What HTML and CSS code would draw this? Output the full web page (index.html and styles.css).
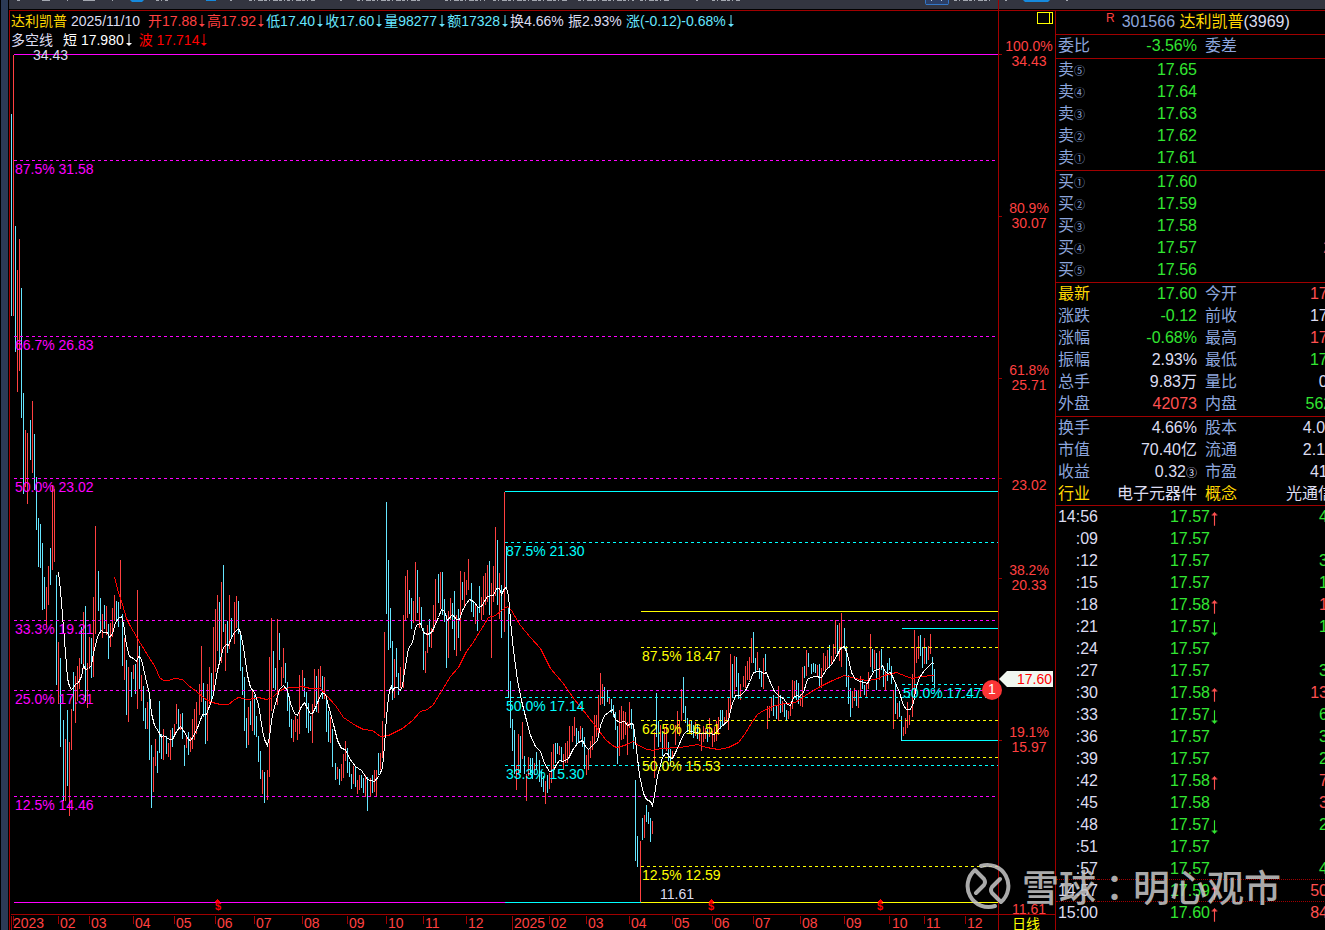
FILE: index.html
```html
<!DOCTYPE html>
<html lang="zh-CN">
<head>
<meta charset="utf-8">
<meta name="viewport" content="width=device-width, initial-scale=1">
<title>达利凯普 301566</title>
<link rel="stylesheet" href="styles.css">
</head>
<body>
<svg class="defs" aria-hidden="true">
  <symbol id="down" viewBox="0 0 7 14"><path d="M3 1h1v12H3zM1 10h5v1H1zM2 11h3v1H2z" fill="currentColor"/></symbol>
  <symbol id="up" viewBox="0 0 7 14"><path d="M3 1h1v12H3zM1 3h5v1H1zM2 2h3v1H2z" fill="currentColor"/></symbol>
</svg>
<div class="app">
  <div class="rail"></div>
  <div class="workspace">
    <div class="toolbar">
      <svg width="1316" height="9" viewBox="9 0 1316 9" aria-hidden="true">
        <path d="M17 0h3v1h-3zM42 0h8v1h-8zM67 0h1v1h-1zM83 0h12v1H83zM112 0h1v1h-1z" fill="#a3a7b0"/>
        <path d="M156 .5h12M249 .5h36M287 .5h28M357 .5h64M445 .5h40M493 .5h74M578 .5h56M640 .5h30M712 .5h28M954 .5h36M230 .5h2M340 .5h2M696 .5h2M1005 .5h2M1066 .5h2" stroke="#a3a7b0" stroke-dasharray="3 2 1 3 5 1"/>
        <path d="M130 0h14l-2 2h-10zM206 0h10v1h-10zM1023 0h27l-2 2h-23z" fill="#1689dc"/>
        <path d="M925 0h24v3l-1 2h-22l-1-2z" fill="#3377c8"/><path d="M926 0h22v4h-22z" fill="#2c3f66"/><path d="M931 0h1v1h-1zM941 0h1v1h-1z" fill="#bcd"/>
      </svg>
    </div>
    <main class="panes">
      <section class="chart-pane">
        <header class="quote">
          <div class="line">
            <span class="name">达利凯普</span><span class="date">2025/11/10</span>
            <span class="red">开17.88<svg class="arr"><use href="#down"/></svg></span>
            <span class="red">高17.92<svg class="arr"><use href="#down"/></svg></span>
            <span class="cy">低17.40<svg class="arr"><use href="#down"/></svg></span>
            <span class="cy">收17.60<svg class="arr"><use href="#down"/></svg></span>
            <span class="cy">量98277<svg class="arr"><use href="#down"/></svg></span>
            <span class="cy">额17328<svg class="arr"><use href="#down"/></svg></span>
            <span class="pct">换4.66%</span><span class="pct">振2.93%</span>
            <span class="cy">涨(-0.12)-0.68%<svg class="arr"><use href="#down"/></svg></span>
            <button class="toggle" type="button" aria-label="侧栏"></button>
          </div>
          <div class="line second">
            <span class="ind">多空线</span><span class="white">短 17.980<svg class="arr"><use href="#down"/></svg></span>
            <span class="pure">波 17.714<svg class="arr"><use href="#down"/></svg></span>
          </div>
        </header>
        <svg class="chart" viewBox="10 50 1045 880" role="img" aria-label="日线">
          <g transform="translate(.5 .5)" fill="none">
            <path class="frame" d="M998 -40V930M10 914H1055M998 54h3M998 216h3M998 378h3M998 478h3M998 578h3M998 740h3M11 915V930M13 915V924M58 915v8M89 915v8M133 915v8M174 915v8M215 915v8M254 915v8M302 915v8M347 915v8M386 915v8M423 915v8M466 915v8M512 915V930M549 915v8M586 915v8M629 915v8M672 915v8M712 915v8M753 915v8M800 915v8M844 915v8M889 915v8M924 915v8M965 915v8"/>
            <path id="falls" class="fall"/>
            <path id="rises" class="rise"/>
            <path class="mg" d="M13 54H997M13 902H504"/>
            <path class="mg dash" d="M13 160H997M13 336H997M13 478H997M13 620H997M13 690H997M13 796H997"/>
            <path class="cn" d="M504 491H997M504 902H640M901 628H997M901 740H997"/>
            <path class="cn dash" d="M504 542H997M504 697H997M504 765H997M901 684H997"/>
            <path class="yl" d="M640 611H997M640 902H997"/>
            <path class="yl dash" d="M640 647H997M640 720H997M640 757H997M640 866H997"/>
            <polyline class="slow" points="114,577 118,592 122,604 126,618 130,626 136,636 140,643 148,656 155,667 159,677 163,680 168,680 174,678 182,679 188,685 196,691 204,698 212,702 220,704 228,704 233,700 238,697 247,699 254,698 258,697 266,699 272,697 278,691 284,688 291,687 297,687 302,686 310,688 320,688 326,695 335,705 343,717 355,725 363,729 372,730 380,736 388,735 392,733 402,728 412,720 420,711 427,709 433,704 442,689 450,676 458,667 466,651 472,643 480,630 488,617 495,615 501,610 507,606 511,610 520,625 530,637 540,648 550,668 562,682 574,699 586,714 596,727 605,739 612,745 616,747 624,745 633,741 638,745 647,749 653,750 660,748 680,747 697,744 706,747 718,749 728,747 738,742 744,734 752,721 757,714 763,710 775,705 785,703 795,702 805,695 820,686 832,680 844,675 855,678 866,680 875,679 884,675 896,672 906,676 912,678 920,676 934,675"/>
            <polyline class="fast" points="58,572 60,590 62,615 64,640 66,665 67,678 69,686 71,689 73,687 75,684 78,682 81,676 83,665 85,669 88,668 91,665 93,653 96,640 98,634 101,630 103,632 107,632 109,637 112,633 115,622 118,618 121,616 123,623 126,645 129,656 133,658 136,661 138,656 140,657 142,663 146,682 149,693 151,713 154,725 158,731 161,737 163,735 166,737 169,739 172,739 176,731 180,726 183,730 188,739 190,740 193,736 198,725 202,714 206,714 210,703 213,694 217,670 220,658 223,647 226,644 228,645 231,637 234,632 238,628 240,632 243,647 247,675 250,687 254,692 258,704 262,730 264,739 267,745 269,736 272,714 275,703 279,689 283,685 287,690 290,703 294,713 297,715 301,706 304,702 307,708 310,713 312,713 316,705 319,697 322,692 325,694 328,705 333,724 337,740 341,748 345,749 349,758 355,766 361,770 367,779 374,781 379,775 382,767 384,745 385,730 387,705 389,690 391,686 392,691 394,687 397,687 400,690 402,685 405,665 408,648 412,642 415,627 417,624 420,623 423,632 427,634 431,632 434,626 438,617 441,609 444,611 447,620 452,614 456,619 459,619 462,610 466,603 469,599 473,601 478,607 481,606 487,596 493,595 496,588 499,588 501,594 504,588 506,587 508,595 510,620 513,650 517,680 521,700 526,720 530,735 535,746 540,751 544,763 549,771 553,770 556,764 559,760 563,761 568,758 573,748 578,742 582,740 585,746 588,749 593,744 597,740 600,725 604,715 612,709 615,719 619,722 624,721 627,725 631,723 633,724 635,740 639,775 643,793 646,799 650,801 652,805 654,795 657,775 659,768 662,757 665,753 667,753 669,757 672,758 676,750 680,741 683,734 687,730 690,731 695,732 700,733 708,733 714,734 719,728 728,720 731,706 735,695 740,695 745,690 749,682 753,672 759,671 764,673 766,672 769,680 774,691 779,696 783,698 787,704 790,705 793,697 796,695 799,696 803,692 807,679 810,677 815,676 821,677 826,669 831,664 836,656 840,648 844,646 847,654 851,672 855,679 860,681 867,683 870,677 874,670 880,668 882,665 884,670 887,673 890,672 893,678 899,692 903,705 906,709 910,709 913,702 916,686 919,677 924,670 929,665 932,662 934,664"/>
          </g>
          <g class="t-mg">
            <text x="15" y="174">87.5% 31.58</text><text x="15" y="350">66.7% 26.83</text><text x="15" y="492">50.0% 23.02</text>
            <text x="15" y="634">33.3% 19.21</text><text x="15" y="704">25.0% 17.31</text><text x="15" y="810">12.5% 14.46</text>
          </g>
          <g class="t-cn">
            <text x="506" y="556">87.5% 21.30</text><text x="506" y="711">50.0% 17.14</text><text x="506" y="779">33.3% 15.30</text><text x="903" y="698">50.0% 17.47</text>
          </g>
          <g class="t-yl">
            <text x="642" y="661">87.5% 18.47</text><text x="642" y="734">62.5% 16.51</text><text x="642" y="771">50.0% 15.53</text><text x="642" y="880">12.5% 12.59</text>
          </g>
          <g class="t-wh"><text x="33" y="60">34.43</text><text x="660" y="899">11.61</text></g>
          <g class="t-axis mid">
            <text x="1029" y="51">100.0%</text><text x="1029" y="66">34.43</text>
            <text x="1029" y="213">80.9%</text><text x="1029" y="228">30.07</text>
            <text x="1029" y="375">61.8%</text><text x="1029" y="390">25.71</text>
            <text x="1029" y="490">23.02</text>
            <text x="1029" y="575">38.2%</text><text x="1029" y="590">20.33</text>
            <text x="1029" y="737">19.1%</text><text x="1029" y="752">15.97</text>
            <text x="1029" y="914">11.61</text>
          </g>
          <g class="t-axis">
            <text x="13" y="928">2023</text><text x="60" y="928">02</text><text x="91" y="928">03</text><text x="135" y="928">04</text><text x="176" y="928">05</text><text x="217" y="928">06</text><text x="256" y="928">07</text><text x="304" y="928">08</text><text x="349" y="928">09</text><text x="388" y="928">10</text><text x="425" y="928">11</text><text x="468" y="928">12</text>
            <text x="514" y="928">2025</text><text x="551" y="928">02</text><text x="588" y="928">03</text><text x="631" y="928">04</text><text x="674" y="928">05</text><text x="714" y="928">06</text><text x="755" y="928">07</text><text x="802" y="928">08</text><text x="846" y="928">09</text><text x="892" y="928">10</text><text x="926" y="928">11</text><text x="967" y="928">12</text>
          </g>
          <g class="t-div mid">
            <path d="M217 899l3 3h-6zM711 899l3 3h-6zM880 899l3 3h-6z"/>
            <text x="218" y="910">$</text><text x="711" y="910">$</text><text x="880" y="910">$</text>
          </g>
          <text class="period" x="1012" y="929">日线</text>
          <path d="M999 679l8-8h46v16h-46z" fill="#f0f7f0"/>
          <text class="last" x="1017" y="684">17.60</text>
          <circle cx="992" cy="690" r="10" fill="#fb3535"/>
          <text class="badge" x="992" y="694">1</text>
        </svg>
      </section>
      <aside class="side">
        <h1 class="title"><sup>R</sup><span class="code">301566</span> <span class="name">达利凯普</span><span class="rank">(3969)</span></h1>
        <table class="grid">
          <colgroup><col class="c1"><col class="c2"><col class="c3"><col class="c4"></colgroup>
          <tbody class="single"><tr><th>委比</th><td class="gr">-3.56%</td><th>委差</th><td></td></tr></tbody>
          <tbody>
            <tr><th>卖<small>⑤</small></th><td class="gr">17.65</td><th></th><td></td></tr>
            <tr><th>卖<small>④</small></th><td class="gr">17.64</td><th></th><td></td></tr>
            <tr><th>卖<small>③</small></th><td class="gr">17.63</td><th></th><td></td></tr>
            <tr><th>卖<small>②</small></th><td class="gr">17.62</td><th></th><td></td></tr>
            <tr><th>卖<small>①</small></th><td class="gr">17.61</td><th></th><td></td></tr>
          </tbody>
          <tbody>
            <tr><th>买<small>①</small></th><td class="gr">17.60</td><th></th><td></td></tr>
            <tr><th>买<small>②</small></th><td class="gr">17.59</td><th></th><td></td></tr>
            <tr><th>买<small>③</small></th><td class="gr">17.58</td><th></th><td></td></tr>
            <tr><th>买<small>④</small></th><td class="gr">17.57</td><th></th><td class="rd">200</td></tr>
            <tr><th>买<small>⑤</small></th><td class="gr">17.56</td><th></th><td></td></tr>
          </tbody>
          <tbody>
            <tr><th class="gold">最新</th><td class="gr">17.60</td><th>今开</th><td class="rd">17.88</td></tr>
            <tr><th>涨跌</th><td class="gr">-0.12</td><th>前收</th><td>17.72</td></tr>
            <tr><th>涨幅</th><td class="gr">-0.68%</td><th>最高</th><td class="rd">17.92</td></tr>
            <tr><th>振幅</th><td>2.93%</td><th>最低</th><td class="gr">17.40</td></tr>
            <tr><th>总手</th><td>9.83万</td><th>量比</th><td>0.84</td></tr>
            <tr><th>外盘</th><td class="rd">42073</td><th>内盘</th><td class="gr">56204</td></tr>
          </tbody>
          <tbody class="tight">
            <tr><th>换手</th><td>4.66%</td><th>股本</th><td>4.00亿</td></tr>
            <tr><th>市值</th><td>70.40亿</td><th>流通</th><td>2.10亿</td></tr>
            <tr><th>收益</th><td>0.32<small>③</small></td><th>市盈</th><td>41.25</td></tr>
            <tr><th class="gold">行业</th><td>电子元器件</td><th class="gold">概念</th><td>光通信息</td></tr>
          </tbody>
        </table>
        <table class="ticks">
          <colgroup><col class="k1"><col class="k2"><col class="k3"><col class="k4"></colgroup>
          <tbody id="ticks"></tbody>
        </table>
      </aside>
    </main>
  </div>
</div>
<div class="watermark">
  <svg width="48" height="48" viewBox="-24 -24 48 48" aria-hidden="true"><path d="M-12 7L-4-1Q-2-4-4-7L-13-16A21 21 0 0 0 7 20M12-7L4 1Q2 4 4 7L13 16A21 21 0 0 0-7-20" fill="none" stroke="currentColor" stroke-width="4" stroke-linecap="round" stroke-linejoin="round"/></svg>
  <span>雪球<i lang="zh-Hant">：</i>明心观市</span>
</div>
<script src="app.js"></script>
</body>
</html>
```
FILE: styles.css
```css
* { box-sizing: border-box; }
body {
  margin: 0;
  background: #000;
  color: #dcdcf0;
  font: 14px/18px "Liberation Sans", "Noto Sans CJK SC", sans-serif;
  overflow: hidden;
  position: relative;
}
.defs { position: absolute; width: 0; height: 0; }
.app { display: flex; min-height: 100vh; }
.rail { flex: 0 0 9px; background: #2b3a55; border: solid #000; border-width: 0 1px; }
.workspace { flex: 1; min-width: 0; display: flex; flex-direction: column; }
.toolbar { height: 10px; background: #333540; border-bottom: 1px solid #000; overflow: hidden; }
.toolbar svg { display: block; }
.panes { flex: 1; display: flex; border-top: 1px solid #a00000; }
.chart-pane { flex: 1; min-width: 0; border: solid #a00000; border-width: 0 1px; }

.quote { height: 39px; padding-left: 1px; white-space: nowrap; }
.line { display: flex; height: 19px; align-items: center; }
.line span { display: flex; align-items: center; }
.arr { width: 10px; height: 14px; display: block; }
.name { color: #ffd700; }
.date { margin: 0 8px 0 4px; }
.red { color: #ff4040; }
.cy { color: #66e6ff; }
.pct { width: 58px; }
.white { color: #fff; white-space: pre; }
.pure { color: #f00; white-space: pre; margin-left: 5px; }
.ind { margin-right: 10px; }
.toggle {
  width: 16px; height: 12px; margin: 1px 2px 0 auto; padding: 0;
  align-self: flex-start;
  border: 1px solid #ff0; border-radius: 0;
  background: linear-gradient(90deg, #000 11px, #ff0 11px, #ff0 12px, #000 12px);
}

.chart { display: block; width: 100%; overflow: visible; }
.chart text { font-size: 14px; }
.chart g path, .chart polyline { stroke-width: 1; shape-rendering: crispEdges; }
.frame { stroke: #a00000; }
.fall { stroke: #66e6ff; }
.rise { stroke: #ff4040; }
.mg { stroke: #f0f; }
.cn { stroke: #0ff; }
.yl { stroke: #ff0; }
.dash { stroke-dasharray: 3 3; }
.fast { stroke: #fff; }
.slow { stroke: #f00; }
.t-mg { fill: #f0f; }
.t-cn { fill: #0ff; }
.t-yl { fill: #ff0; }
.t-wh { fill: #dcdcf0; }
.t-axis { fill: #ff4040; }
.t-div { fill: #f00; }
.chart .t-div text { font-size: 11px; font-weight: bold; }
.mid { text-anchor: middle; }
.period { fill: #ff0; }
.last { fill: #f00; }
.badge { fill: #fff; text-anchor: middle; }

.side { flex: 0 0 269px; overflow: hidden; font-size: 16px; line-height: 22px; }
.title { height: 23px; margin: 0 0 0 50px; font-size: 16px; font-weight: normal; white-space: nowrap; }
.title sup { font-size: 12px; line-height: 12px; color: #ff4040; margin-right: 7px; vertical-align: 5px; }
.code { color: #8ca5dc; }
table { border-collapse: separate; border-spacing: 0; table-layout: fixed; white-space: nowrap; }
th, td { padding: 0; height: 22px; line-height: 20px; }
th { text-align: left; font-weight: normal; color: #8ca5dc; padding-left: 2px; }
td { text-align: right; }
small { font-size: 11px; line-height: 11px; }
.grid { width: 294px; }
.c1 { width: 42px; }
.c2 { width: 99px; }
.c3 { width: 47px; }
.c4 { width: 106px; }
.grid th:nth-child(3) { padding-left: 8px; }
.grid tr:last-child > * { height: 23px; padding-bottom: 1px; }
.grid tr:first-child > * { border-top: 1px solid #a00000; height: 23px; }
.grid .single tr > * { height: 24px; }
.grid .tight tr:last-child > * { height: 22px; padding-bottom: 0; }
.gold { color: #ffd700; }
.gr { color: #32e632; }
.rd { color: #ff5050; }
.ticks { width: 272px; border-top: 1px solid #a00000; }
.ticks svg { display: block; width: 9px; height: 16px; margin-top: 4px; }
.k1 { width: 42px; }
.k2 { width: 112px; }
.k3 { width: 10px; }
.k4 { width: 108px; }
.ticks .mark > * { border-bottom: 1px dotted #a00000; }

.watermark {
  position: absolute; top: 862px; right: 44px;
  display: flex; align-items: center; gap: 10px;
  color: #c8c8c8; opacity: .85;
  font-size: 37px; line-height: 48px; font-weight: 500;
  font-family: "Noto Sans CJK SC", sans-serif;
  pointer-events: none; white-space: nowrap;
}
.watermark svg { display: block; }
.watermark i { font-style: normal; font-family: "Noto Sans CJK TC", sans-serif; }
```
FILE: app.js
```js
// Price bars: x, high, low on the chart's own scale.
const falls = `11 113 315,15 225 351,21 287 417,23 392 493,30 419 459,34 433 489,36 476 529,38 517 566,40 523 567,42 542 609,44 576 608,50 547 584,56 574 684,60 657 746,63 719 800,67 709 785,73 671 710,81 626 663,85 605 700,91 637 677,98 570 610,100 597 632,104 604 628,108 623 658,116 600 619,118 601 626,122 613 665,126 659 714,131 671 696,135 663 693,139 645 688,143 685 720,145 707 728,149 691 759,151 744 807,157 750 772,159 700 752,161 733 758,166 735 753,172 727 746,178 708 729,182 712 738,184 744 765,188 731 754,203 682 716,205 700 743,211 672 699,219 601 662,223 564 631,227 620 652,231 617 638,238 600 633,240 630 670,242 666 694,244 676 730,246 717 747,250 700 724,254 694 734,256 715 736,258 735 761,260 750 778,264 771 802,273 650 687,275 667 689,279 632 659,285 662 682,287 681 710,289 695 726,291 718 737,304 677 696,306 691 727,308 702 732,310 715 730,316 675 711,322 675 698,326 695 731,328 710 741,332 728 766,335 762 779,339 768 784,347 747 772,349 761 776,351 773 788,355 766 786,361 774 787,363 777 792,367 776 810,372 774 792,378 752 774,386 501 613,388 559 649,390 607 647,392 640 699,396 647 676,398 672 694,409 589 613,411 597 628,417 569 612,421 606 627,423 627 669,429 618 646,438 573 602,442 571 614,444 598 621,446 614 667,452 602 628,454 590 649,458 608 637,462 581 599,471 582 611,473 600 616,477 605 630,479 585 612,489 560 614,497 539 604,501 584 637,506 545 588,508 607 697,510 680 727,512 718 750,514 729 773,520 735 772,524 755 773,530 757 774,532 757 778,536 751 769,539 759 781,541 770 786,543 775 791,547 774 792,555 742 762,557 742 753,561 746 761,576 727 743,578 730 741,582 727 746,584 736 768,604 686 705,607 689 701,611 698 712,613 704 716,615 711 729,617 725 763,631 708 728,633 725 748,635 779 860,637 835 866,642 817 839,646 804 821,648 811 823,650 817 841,656 692 736,658 720 746,662 730 755,668 741 760,670 748 765,683 676 712,685 705 722,687 717 731,691 720 734,693 724 737,697 724 738,707 728 741,720 709 728,722 709 724,732 663 697,736 656 686,738 672 698,753 631 662,755 657 672,759 667 678,761 670 686,765 653 670,773 694 715,776 705 718,780 694 712,784 702 716,786 709 719,796 679 699,798 682 703,804 665 677,808 652 666,811 663 673,813 662 671,815 663 672,819 663 686,829 644 667,837 624 652,844 627 648,846 645 686,848 674 703,850 687 716,856 689 705,862 678 688,864 684 694,872 648 671,876 652 689,881 648 669,883 665 686,887 662 680,889 657 669,891 665 683,895 683 713,899 700 716,901 715 740,920 634 655,922 646 667,926 646 663,932 656 681,934 668 687`;
const rises = `13 54 315,17 269 391,19 238 370,25 429 486,27 432 503,32 400 472,46 586 626,48 565 604,52 484 569,54 488 561,58 641 703,65 738 800,69 741 815,71 708 749,75 675 722,77 665 700,79 657 688,83 611 668,87 662 707,89 636 668,93 596 676,95 525 633,102 613 637,106 605 634,110 622 646,112 607 636,114 594 620,120 559 608,124 637 679,128 666 721,133 664 678,137 589 708,141 674 700,147 701 728,153 756 791,155 738 765,163 728 759,168 742 756,170 729 759,174 723 735,176 703 723,180 713 729,186 735 747,190 736 751,192 718 748,194 708 739,196 701 733,199 683 714,201 645 701,207 683 740,209 666 703,213 626 695,215 608 671,217 594 650,221 581 662,225 623 670,229 594 648,234 601 643,236 595 627,248 706 744,252 690 730,262 769 793,267 769 799,269 656 776,271 617 710,277 618 704,281 666 685,283 647 677,293 719 741,295 715 731,297 718 739,299 674 733,302 669 690,312 703 742,314 668 706,318 668 712,320 665 686,324 676 698,330 716 742,337 766 778,341 763 780,343 753 777,345 740 760,353 765 783,357 779 793,359 774 789,365 774 796,370 777 796,374 769 791,376 769 796,380 752 769,382 720 757,384 631 717,394 658 697,400 666 687,403 614 687,405 575 620,407 569 617,413 600 622,415 561 620,419 596 627,425 650 672,427 624 652,431 627 647,433 604 631,435 578 624,440 571 608,448 610 657,450 597 619,456 614 655,460 570 650,464 571 607,466 579 594,468 558 589,475 602 623,481 596 619,483 575 614,485 572 604,487 564 601,491 582 657,493 565 601,495 526 595,499 572 618,504 491 631,516 764 789,518 733 772,522 721 758,526 773 800,528 756 775,534 762 774,545 780 803,549 772 788,551 751 782,553 743 771,559 745 754,563 753 768,565 742 762,567 740 762,569 725 754,572 725 741,574 716 735,580 725 738,586 754 774,588 749 769,590 740 757,592 735 749,594 714 742,596 714 736,598 694 734,600 672 704,602 683 703,609 696 703,619 709 755,621 705 739,623 710 738,625 711 734,627 721 754,629 701 727,640 840 902,644 814 837,652 820 833,654 731 777,660 724 741,664 727 747,666 724 750,672 750 758,675 724 744,677 710 733,679 720 735,681 688 720,689 719 731,695 721 735,699 726 740,701 732 750,703 725 741,705 727 738,709 717 736,712 730 746,714 726 741,716 720 740,718 716 734,724 716 723,726 709 722,728 697 729,730 653 708,734 655 693,740 683 699,743 675 686,745 665 687,747 660 679,749 656 679,751 637 662,757 651 669,763 657 688,767 705 728,769 705 717,771 697 710,778 685 720,782 700 711,788 710 718,790 705 715,792 679 708,794 680 697,800 693 705,802 666 706,806 649 675,817 664 676,821 667 687,823 652 670,825 655 670,827 649 668,831 655 664,833 643 661,835 619 653,839 622 660,841 612 666,852 690 707,854 687 700,858 689 707,860 675 697,866 682 697,868 671 688,870 633 666,874 649 668,879 650 679,885 671 690,893 689 728,897 702 718,903 726 735,905 717 733,907 701 727,909 714 724,912 673 716,914 629 699,916 646 662,918 635 658,924 637 663,928 645 659,930 633 653`;
const toPath = s => s.split(",").map(b => {
  const [x, high, low] = b.split(" ");
  return `M${x} ${high}V${low}`;
}).join("");
document.getElementById("falls").setAttribute("d", toPath(falls));
document.getElementById("rises").setAttribute("d", toPath(rises));

// Trades: time, price, direction, volume, volume colour, separator below.
const trades = [
  ["14:56", "17.57", "up", "4", "gr"], [":09", "17.57", "", "", ""], [":12", "17.57", "", "3", "gr"],
  [":15", "17.57", "", "1", "gr"], [":18", "17.58", "up", "1", "rd"], [":21", "17.57", "down", "1", "gr"],
  [":24", "17.57", "", "", ""], [":27", "17.57", "", "3", "gr"], [":30", "17.58", "up", "13", "rd"],
  [":33", "17.57", "down", "6", "gr"], [":36", "17.57", "", "3", "gr"], [":39", "17.57", "", "2", "gr"],
  [":42", "17.58", "up", "7", "rd"], [":45", "17.58", "", "3", "rd"], [":48", "17.57", "down", "2", "gr"],
  [":51", "17.57", "", "", ""], [":57", "17.57", "", "4", "gr", 1], ["14:57", "17.59", "up", "50", "rd", 1],
  ["15:00", "17.60", "up", "84", "rd"]
];
document.getElementById("ticks").innerHTML = trades.map(([time, price, dir, vol, tone, mark]) =>
  `<tr${mark ? ' class="mark"' : ""}><td>${time}</td><td class="gr">${price}</td>` +
  `<td class="${dir === "up" ? "rd" : "gr"}">${dir ? `<svg aria-hidden="true"><use href="#${dir}"/></svg>` : ""}</td>` +
  `<td class="${tone}">${vol}</td></tr>`).join("");
```
